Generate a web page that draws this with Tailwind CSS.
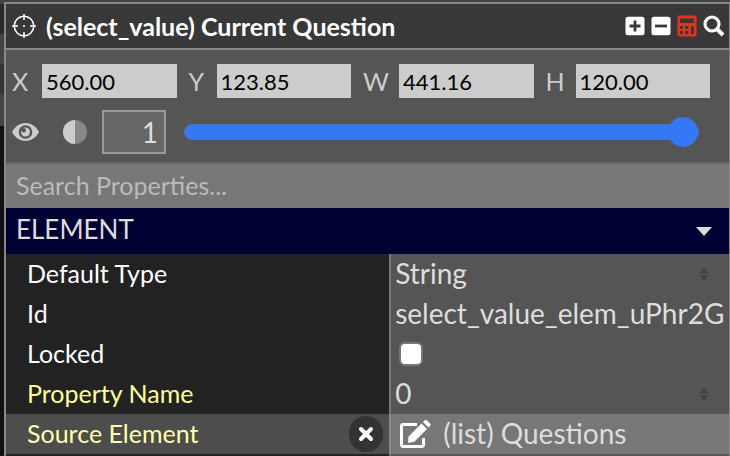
<!DOCTYPE html>
<html lang="en">
<head>
    <meta charset="UTF-8">
    <title>Properties</title>
    <meta name="viewport" content="width=device-width, initial-scale=1.0">
    <script src="https://cdn.jsdelivr.net/npm/@tailwindcss/browser@4"></script>
</head>
<body class="flex min-h-screen bg-[#111] font-['Lato',sans-serif] text-[25px] leading-8 text-[#ddd]">
    <!-- edge of the canvas behind the panel -->
    <div class="w-1 shrink-0">
        <div class="h-1 bg-[#444]"></div>
        <div class="h-[30px] bg-[#2b2b2b]"></div>
        <div class="h-[30px] bg-[#444]"></div>
        <div class="h-[30px] bg-[#333]"></div>
        <div class="h-8 bg-[#444]"></div>
    </div>

    <main class="flex min-w-0 flex-1 flex-col border-t-2 border-t-[#444]">
        <div class="flex flex-1 flex-col border-t-2 border-r border-l-2 border-[#888]">
            <header class="flex h-[46px] items-center border-b-2 border-[#888] bg-[#383838] pr-1 pl-1.5 text-white">
                <svg class="mr-2.5 size-6 shrink-0" viewBox="0 0 24 24" fill="none" stroke="currentColor" stroke-width="1.5">
                    <circle cx="12" cy="12" r="9.8"/>
                    <path d="M12 0v6M12 18v6M0 12h6M18 12h6M11 12h2"/>
                </svg>
                <h1 class="flex-1 truncate font-bold">(select_value) Current Question</h1>
                <div class="flex items-center gap-1.5">
                    <button aria-label="Expand all">
                        <svg class="size-5" viewBox="0 0 20 20"><rect x=".5" y=".8" width="19" height="18.5" rx="2.5" fill="#fff"/><path d="M10 4.5v11M4.5 10h11" stroke="#383838" stroke-width="2.8"/></svg>
                    </button>
                    <button aria-label="Collapse all">
                        <svg class="size-5" viewBox="0 0 20 20"><rect x=".5" y=".8" width="19" height="18.5" rx="2.5" fill="#fff"/><path d="M4 10h12" stroke="#383838" stroke-width="2.8"/></svg>
                    </button>
                    <button aria-label="Calculator">
                        <svg class="h-[22px] w-5" viewBox="0 0 20 22"><rect x=".5" y=".5" width="19" height="21" rx="2" fill="#e8301f"/><path d="M3 3.5h14v4.5H3zM3 11h3v3H3zM8.3 11h3v3h-3zM3 16h3v3H3zM8.3 16h3v3h-3zM14 11h3v8h-3z" fill="#383838"/></svg>
                    </button>
                    <button aria-label="Search">
                        <svg class="size-[22px]" viewBox="0 0 22 22" fill="none" stroke="#fff" stroke-width="3.2"><circle cx="9" cy="9" r="7"/><path d="M14 14l6 6" stroke-width="4"/></svg>
                    </button>
                </div>
            </header>

            <section class="border-b-2 border-[#666] bg-[#555] pt-3.5 pb-2">
                <div class="flex gap-3 pr-[19px] pl-1.5 text-[#ccc]">
                    <div class="flex min-w-0 flex-auto items-center gap-3">
                        <label for="x" class="w-[18px]">X</label>
                        <input id="x" value="560.00" class="h-[34px] w-0 flex-1 bg-[#ccc] px-1 text-[22px] text-black">
                    </div>
                    <div class="flex min-w-0 flex-auto items-center gap-3">
                        <label for="y" class="w-4">Y</label>
                        <input id="y" value="123.85" class="h-[34px] w-0 flex-1 bg-[#ccc] px-1 text-[22px] text-black">
                    </div>
                    <div class="flex min-w-0 flex-auto items-center gap-3">
                        <label for="w" class="w-6">W</label>
                        <input id="w" value="441.16" class="h-[34px] w-0 flex-1 bg-[#ccc] px-1 text-[22px] text-black">
                    </div>
                    <div class="flex min-w-0 flex-auto items-center gap-3">
                        <label for="h" class="w-[18px]">H</label>
                        <input id="h" value="120.00" class="h-[34px] w-0 flex-1 bg-[#ccc] px-1 text-[22px] text-black">
                    </div>
                </div>
                <div class="mt-3 flex items-center pr-[30px] pl-1.5">
                    <button aria-label="Visibility" class="mr-6">
                        <svg class="h-[18px] w-[27px]" viewBox="0 0 27 18"><path d="M0 9C3 3.5 7.5 0 13.5 0S24 3.5 27 9C24 14.5 19.5 18 13.5 18S3 14.5 0 9z" fill="#ccc"/><circle cx="13.5" cy="9" r="6.8" fill="#555"/><circle cx="13.5" cy="9" r="4.5" fill="#ccc"/><circle cx="11.7" cy="7.2" r="2.2" fill="#555"/></svg>
                    </button>
                    <svg class="mr-[15px] size-6 shrink-0" viewBox="0 0 24 24"><circle cx="12" cy="12" r="12" fill="#888"/><path d="M12 0a12 12 0 0 0 0 24z" fill="#ccc"/></svg>
                    <input aria-label="Opacity value" value="1" class="mr-[18px] h-11 w-16 border-2 border-[#999] bg-[#666] px-1.5 text-right text-[28px] text-[#ddd]">
                    <input aria-label="Opacity" type="range" min="0" max="1" step="0.01" value="1" class="h-[30px] min-w-0 flex-1 appearance-none bg-transparent [&::-webkit-slider-runnable-track]:h-4 [&::-webkit-slider-runnable-track]:rounded-full [&::-webkit-slider-runnable-track]:border [&::-webkit-slider-runnable-track]:border-[#4874c4] [&::-webkit-slider-runnable-track]:bg-[#3478f6] [&::-webkit-slider-thumb]:-mt-2 [&::-webkit-slider-thumb]:size-[30px] [&::-webkit-slider-thumb]:appearance-none [&::-webkit-slider-thumb]:rounded-full [&::-webkit-slider-thumb]:bg-[#3478f6]">
                </div>
            </section>

            <input type="search" aria-label="Search properties" placeholder="Search Properties..." class="block h-11 w-full bg-[#777] px-2.5 pb-0.5 placeholder:text-[#bbb]">

            <button class="flex h-[46px] w-full items-center justify-between bg-[#000033] pr-4 pb-1 pl-2.5 text-[26px]">
                ELEMENT
                <svg class="mt-1 h-[9px] w-[18px]" viewBox="0 0 18 9"><path d="M1 0h16L9 9z" fill="#ddd"/></svg>
            </button>

            <div class="flex flex-1 flex-col text-white">
                <div class="flex h-10">
                    <label for="type" class="flex w-[53%] items-center bg-[#222] pb-0.5 pl-[21px]">Default Type</label>
                    <div class="relative flex min-w-0 flex-1 items-center border-l-2 border-[#777] bg-[#555] text-[28px] text-[#ddd]">
                        <select id="type" class="h-full w-full appearance-none bg-transparent pb-0.5 pl-1"><option>String</option></select>
                        <svg class="pointer-events-none absolute right-5 h-3.5 w-2.5" viewBox="0 0 10 14"><path d="M5 0l4.5 6h-9zM5 14l4.5-6h-9z" fill="#444"/></svg>
                    </div>
                </div>
                <div class="flex h-10">
                    <label for="id" class="flex w-[53%] items-center bg-[#222] pb-0.5 pl-[21px]">Id</label>
                    <div class="flex min-w-0 flex-1 border-l-2 border-[#777] bg-[#555] px-1 pb-0.5 text-[28px] text-[#ddd]">
                        <input id="id" value="select_value_elem_uPhr2Gc4" class="w-full min-w-0 bg-transparent">
                    </div>
                </div>
                <div class="flex h-10">
                    <label for="locked" class="flex w-[53%] items-center bg-[#222] pb-0.5 pl-[21px]">Locked</label>
                    <div class="flex min-w-0 flex-1 items-center border-l-2 border-[#777] bg-[#555] pl-2">
                        <input id="locked" type="checkbox" class="size-6 appearance-none rounded-md border-2 border-[#777] bg-white">
                    </div>
                </div>
                <div class="flex h-10">
                    <label for="name" class="flex w-[53%] items-center bg-[#222] pb-0.5 pl-[21px] text-[#ffff99]">Property Name</label>
                    <div class="relative flex min-w-0 flex-1 items-center border-l-2 border-[#777] bg-[#555] text-[28px] text-[#ddd]">
                        <select id="name" class="h-full w-full appearance-none bg-transparent pb-0.5 pl-1"><option>0</option></select>
                        <svg class="pointer-events-none absolute right-5 h-3.5 w-2.5" viewBox="0 0 10 14"><path d="M5 0l4.5 6h-9zM5 14l4.5-6h-9z" fill="#444"/></svg>
                    </div>
                </div>
                <div class="flex h-10">
                    <div class="flex w-[53%] items-center justify-between bg-[#4d4d4d] pr-1.5 pl-[21px] text-[#ffffaa]">
                        <span class="pb-0.5">Source Element</span>
                        <button aria-label="Clear source element" class="flex h-9 w-[34px] items-center justify-center rounded-full bg-[#333]">
                            <svg class="size-4" viewBox="0 0 16 16" stroke="#fff" stroke-width="4" stroke-linecap="round"><path d="M3 3l10 10M13 3L3 13"/></svg>
                        </button>
                    </div>
                    <div class="flex min-w-0 flex-1 items-center gap-3 border-l-2 border-[#888] bg-[#777] pl-2 text-[28px] text-[#ddd]">
                        <button aria-label="Edit source element">
                            <svg class="h-7 w-8" viewBox="0 0 32 28"><path d="M18 4.500H4A1.500 1.500 0 0 0 2.500 6v19A1.500 1.500 0 0 0 4 26.500h19a1.500 1.500 0 0 0 1.500-1.500v-7" fill="none" stroke="#fff" stroke-width="3"/><path d="M9.500 16.500L22.500 3.500l5.500 5.500L15 22l-6 .8zM24 2l1.500-1.500c.8-.8 1.800-.6 2.500 0l3 3c.8.800.8 1.800 0 2.500L29.500 7.500z" fill="#fff"/></svg>
                        </button>
                        <span class="truncate pb-0.5">(list) Questions</span>
                    </div>
                </div>
                <div class="flex flex-1">
                    <div class="w-[53%] bg-[#222]"></div>
                    <div class="flex-1 border-l-2 border-[#777] bg-[#555]"></div>
                </div>
            </div>
        </div>
    </main>
</body>
</html>
